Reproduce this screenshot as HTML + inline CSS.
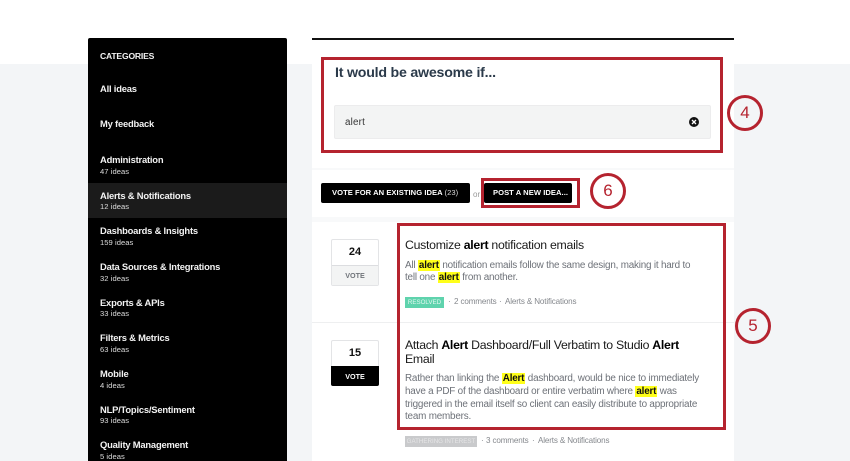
<!DOCTYPE html>
<html><head><meta charset="utf-8">
<style>
html,body{margin:0;padding:0}
body{width:850px;height:461px;overflow:hidden;position:relative;background:#fff;font-family:"Liberation Sans",sans-serif}
.a{position:absolute}
.t{position:absolute;white-space:nowrap}
#bg{left:0;top:64px;width:850px;height:397px;background:#f3f5f7}
#side{left:88px;top:38px;width:199px;height:423px;background:#000;border-radius:2px 2px 0 0}
#sel{left:88px;top:183px;width:199px;height:35px;background:#1b1b1b}
.n{left:100px;color:#f2f2f2;font-size:9.4px;font-weight:bold;letter-spacing:-.2px}
.c{left:100px;color:#ddd;font-size:7.6px;letter-spacing:.05px}
#main{left:312px;top:38px;width:422px;height:423px;background:#fff}
#line{left:312px;top:38px;width:422px;height:2px;background:#111}
.sep{left:312px;width:422px;background:#f8f9fa}
.box{position:absolute;box-sizing:border-box;border:3px solid #b5232f}
.circ{position:absolute;box-sizing:border-box;width:36px;height:36px;border:3px solid #b5232f;border-radius:50%;color:#b5232f;font-size:17px;text-align:center;line-height:29px}
.btn{position:absolute;background:#000;border-radius:2px;color:#fff;font-size:7.6px;font-weight:bold;line-height:20px;height:20px;white-space:nowrap;letter-spacing:.05px}
.ti{color:#1a1a1a;font-size:12.3px;left:405px;letter-spacing:-.28px}
.ti b{color:#000}
.d{color:#6d7178;font-size:9.9px;left:405px;letter-spacing:-.2px}
mark{background:#ffff1a;color:#111;font-weight:bold;padding:0 1px}
.m{color:#85888d;font-size:8.1px;letter-spacing:-.15px}
.vb{position:absolute;left:331px;width:48px;box-sizing:border-box;border:1px solid #e3e4e6;border-radius:2px;background:#fff}
.num{position:absolute;left:331px;width:48px;text-align:center;font-size:11px;font-weight:bold;color:#111}
.bt{font-size:6.2px;line-height:9px;letter-spacing:0;text-align:center}
</style></head>
<body>
<div class="a" id="bg"></div>
<div class="a" id="side"></div>
<div class="a" id="sel"></div>
<div class="t n" style="top:51px;font-weight:bold;font-size:8.6px;letter-spacing:-.2px">CATEGORIES</div>
<div class="t n" style="top:83px">All ideas</div>
<div class="t n" style="top:118px">My feedback</div>
<div class="t n" style="top:154px">Administration</div><div class="t c" style="top:167px">47 ideas</div>
<div class="t n" style="top:190px">Alerts &amp; Notifications</div><div class="t c" style="top:202px">12 ideas</div>
<div class="t n" style="top:225px">Dashboards &amp; Insights</div><div class="t c" style="top:238px">159 ideas</div>
<div class="t n" style="top:261px">Data Sources &amp; Integrations</div><div class="t c" style="top:274px">32 ideas</div>
<div class="t n" style="top:297px">Exports &amp; APIs</div><div class="t c" style="top:309px">33 ideas</div>
<div class="t n" style="top:332px">Filters &amp; Metrics</div><div class="t c" style="top:345px">63 ideas</div>
<div class="t n" style="top:368px">Mobile</div><div class="t c" style="top:381px">4 ideas</div>
<div class="t n" style="top:404px">NLP/Topics/Sentiment</div><div class="t c" style="top:416px">93 ideas</div>
<div class="t n" style="top:439px">Quality Management</div><div class="t c" style="top:452px">5 ideas</div>

<div class="a" id="main"></div>
<div class="a" id="line"></div>
<div class="a sep" style="top:168px;height:2px"></div>
<div class="a sep" style="top:217px;height:5px"></div>
<div class="a" style="left:312px;top:322px;width:422px;height:1px;background:#eeeff0"></div>

<div class="t" style="left:335px;top:65px;font-size:14.2px;font-weight:bold;color:#2b3a4a;letter-spacing:-.22px">It would be awesome if...</div>
<div class="a" style="left:334px;top:105px;width:377px;height:34px;box-sizing:border-box;background:#f3f4f4;border:1px solid #ececed;border-radius:2px"></div>
<div class="t" style="left:345px;top:117px;font-size:9.8px;color:#333;letter-spacing:.2px">alert</div>
<svg class="a" style="left:688px;top:116px" width="12" height="12" viewBox="0 0 12 12"><circle cx="6" cy="6" r="5" fill="#111"/><path d="M4 4L8 8M8 4L4 8" stroke="#fff" stroke-width="1.3"/></svg>

<div class="btn" style="left:321px;top:183px;width:149px;text-indent:11px">VOTE FOR AN EXISTING IDEA <span style="font-weight:normal;color:#ddd">(23)</span></div>
<div class="t" style="left:473px;top:190px;font-size:8px;color:#999">or</div>
<div class="btn" style="left:484px;top:183px;width:88px;text-indent:9px">POST A NEW IDEA...</div>

<div class="vb" style="top:239px;height:47px"></div>
<div class="a" style="left:332px;top:265px;width:46px;height:20px;background:#f3f4f4;border-top:1px solid #dcdde0;box-sizing:border-box"></div>
<div class="num" style="top:246px">24</div>
<div class="t" style="left:331px;width:48px;text-align:center;top:271px;font-size:7.2px;font-weight:bold;color:#70747a;letter-spacing:0">VOTE</div>

<div class="vb" style="top:340px;height:46px"></div>
<div class="a" style="left:331px;top:366px;width:48px;height:20px;background:#000;border-radius:0 0 2px 2px"></div>
<div class="num" style="top:347px">15</div>
<div class="t" style="left:331px;width:48px;text-align:center;top:372px;font-size:7.2px;font-weight:bold;color:#fff;letter-spacing:0">VOTE</div>

<div class="t ti" style="top:238px">Customize <b>alert</b> notification emails</div>
<div class="t d" style="top:260px">All <mark>alert</mark> notification emails follow the same design, making it hard to</div>
<div class="t d" style="top:272px">tell one <mark>alert</mark> from another.</div>
<div class="a" style="left:405px;top:297px;width:39px;height:11px;background:#5fd3ad"></div>
<div class="t bt" style="left:405px;width:39px;top:298px;color:#e4f8f0">RESOLVED</div>
<div class="t m" style="left:448px;top:297px">·</div>
<div class="t m" style="left:454px;top:297px">2 comments</div>
<div class="t m" style="left:499px;top:297px">·</div>
<div class="t m" style="left:505px;top:297px">Alerts &amp; Notifications</div>

<div class="t ti" style="top:338px">Attach <b>Alert</b> Dashboard/Full Verbatim to Studio <b>Alert</b></div>
<div class="t ti" style="top:352px">Email</div>
<div class="t d" style="top:373px">Rather than linking the <mark>Alert</mark> dashboard, would be nice to immediately</div>
<div class="t d" style="top:386px">have a PDF of the dashboard or entire verbatim where <mark>alert</mark> was</div>
<div class="t d" style="top:399px">triggered in the email itself so client can easily distribute to appropriate</div>
<div class="t d" style="top:411px">team members.</div>
<div class="a" style="left:405px;top:436px;width:72px;height:11px;background:#c9cacc"></div>
<div class="t bt" style="left:405px;width:72px;top:437px;color:#e6e6e7">GATHERING INTEREST</div>
<div class="t m" style="left:481px;top:436px">·</div>
<div class="t m" style="left:486px;top:436px">3 comments</div>
<div class="t m" style="left:532px;top:436px">·</div>
<div class="t m" style="left:538px;top:436px">Alerts &amp; Notifications</div>

<div class="box" style="left:321px;top:57px;width:402px;height:96px"></div>
<div class="box" style="left:481px;top:178px;width:99px;height:30px"></div>
<div class="box" style="left:397px;top:223px;width:329px;height:207px"></div>
<div class="circ" style="left:727px;top:95px">4</div>
<div class="circ" style="left:590px;top:173px">6</div>
<div class="circ" style="left:735px;top:308px">5</div>
</body></html>
